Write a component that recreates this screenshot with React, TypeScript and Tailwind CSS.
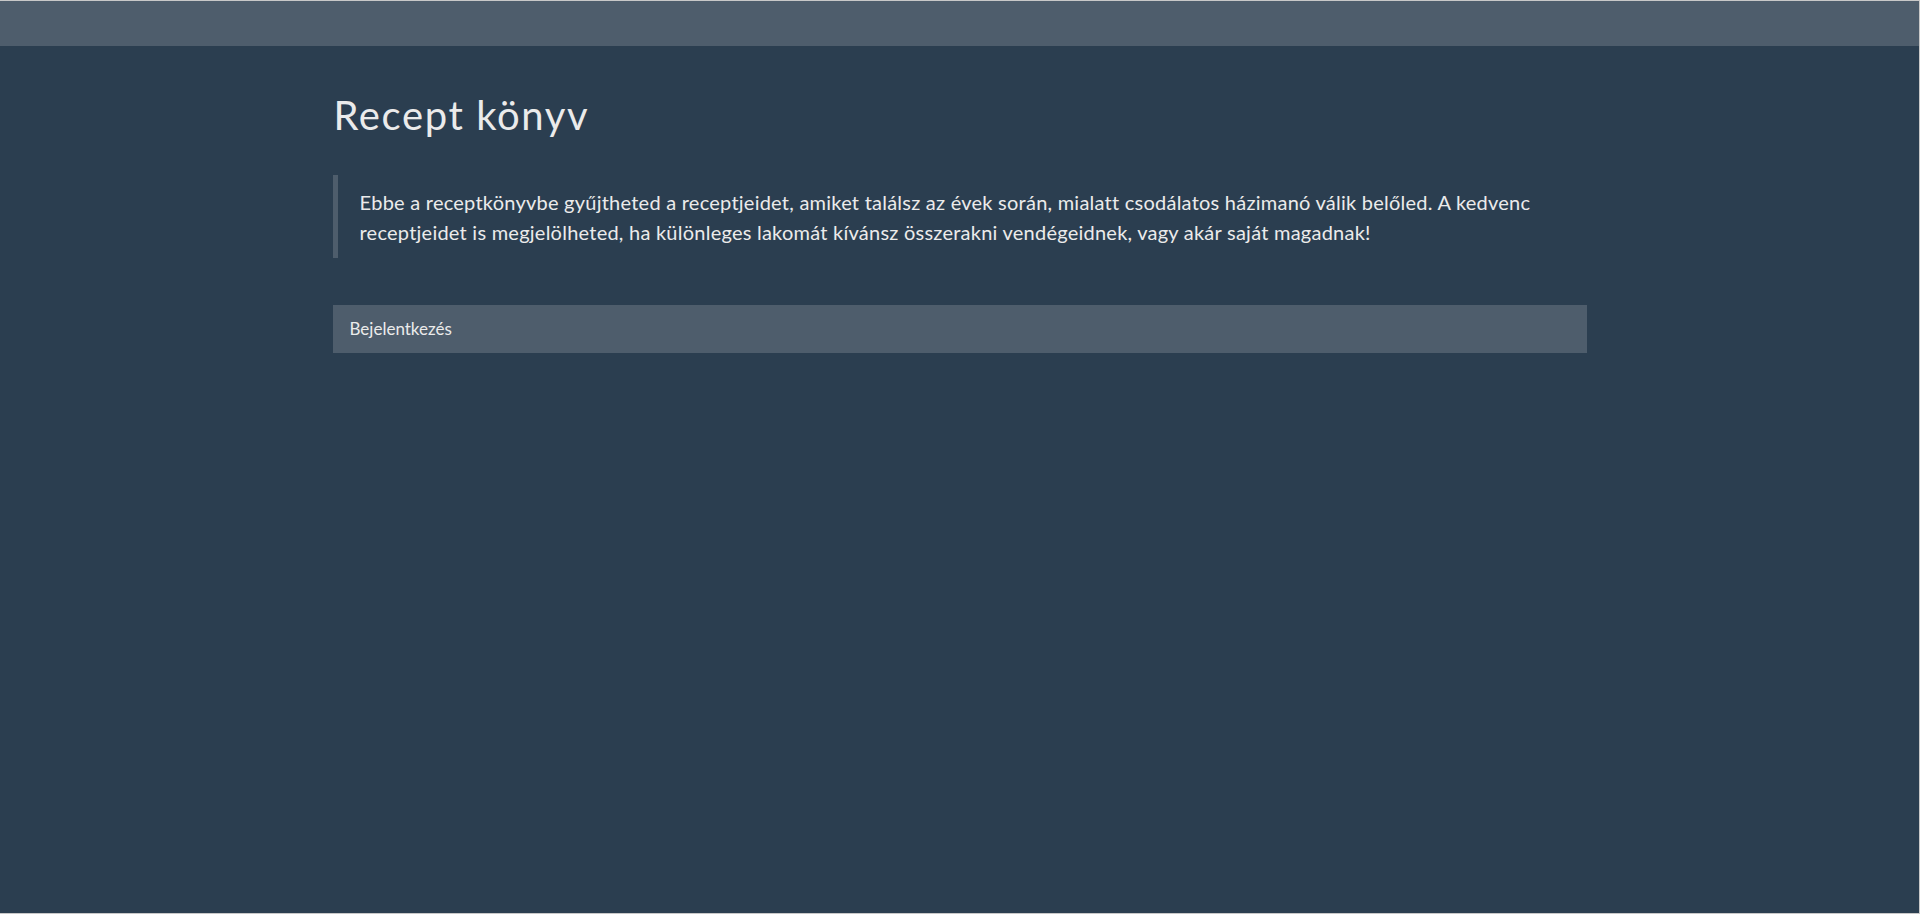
import React from 'react';

// Recept könyv – kezdőlap (Superhero-szerű sötét téma)
const App: React.FC = () => {
  return (
    <div
      className="min-h-[914px] bg-[#2b3e50] text-[#ebebeb] border-t border-b border-r border-[#c8c8c8]"
      style={{ fontFamily: 'Lato, "Noto Sans", sans-serif' }}
    >
      {/* navbar */}
      <nav className="h-[45px] bg-[#4e5d6c]" />

      <main className="mx-auto w-[1254px]">
        <h1 className="mt-[45px] pl-[1px] text-[40px] leading-[48px] font-normal tracking-[0.04em]">
          Recept könyv
        </h1>

        <blockquote className="mt-[36px] border-l-[5px] border-[#4e5d6c] py-[11.5px] pl-[22px] pr-[20px] text-[20px] leading-[30px] tracking-[0.012em]">
          Ebbe a receptkönyvbe gyűjtheted a receptjeidet, amiket találsz az évek során, mialatt
          csodálatos házimanó válik belőled. A kedvenc receptjeidet is megjelölheted, ha különleges
          lakomát kívánsz összerakni vendégeidnek, vagy akár saját magadnak!
        </blockquote>

        <div className="mt-[47px] flex h-[48px] items-center bg-[#4e5d6c] px-[17px]">
          <span className="text-[17px]">Bejelentkezés</span>
        </div>
      </main>
    </div>
  );
};

export default App;
